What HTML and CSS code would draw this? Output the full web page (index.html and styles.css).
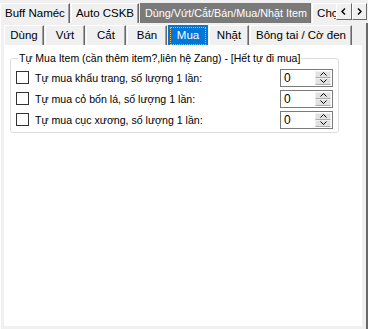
FILE: index.html
```html
<!DOCTYPE html>
<html lang="vi">
<head>
  <meta charset="UTF-8" />
  <title>Auto Item</title>
  <link rel="stylesheet" href="styles.css">
</head>
<body>
  <div class="window">
    <div class="tabbar">
      <div class="tabs">
        <div class="tab">Buff Naméc</div>
        <div class="tab">Auto CSKB</div>
        <div class="tab sel">Dùng/Vứt/Cắt/Bán/Mua/Nhặt Item</div>
        <div class="tab">Chọn map</div>
      </div>
      <div class="scroller">
        <span class="arrow"><svg width="5" height="7" viewBox="0 0 5 7"><path d="M4 0.5 L1 3.5 L4 6.5" fill="none" stroke="#000" stroke-width="1.4"/></svg></span>
        <span class="arrow"><svg width="5" height="7" viewBox="0 0 5 7"><path d="M1 0.5 L4 3.5 L1 6.5" fill="none" stroke="#000" stroke-width="1.4"/></svg></span>
      </div>
    </div>

    <div class="page">
      <div class="subtabs">
        <div class="subtab">Dùng</div>
        <div class="subtab">Vứt</div>
        <div class="subtab">Cắt</div>
        <div class="subtab">Bán</div>
        <div class="subtab active"><span class="focus">Mua</span></div>
        <div class="subtab">Nhặt</div>
        <div class="subtab">Bông tai / Cờ đen</div>
      </div>

      <div class="subpage">
        <fieldset class="group">
          <legend>Tự Mua Item (cần thêm item?,liên hệ Zang) - [Hết tự đi mua]</legend>

          <div class="row">
            <label><span class="check"></span>Tự mua khẩu trang, số lượng 1 lần:</label>
            <div class="num">
              <span class="val">0</span>
              <span class="spin">
                <span class="btn"><svg width="7" height="4" viewBox="0 0 7 4"><path d="M0.5 3.5 L3.5 0.5 L6.5 3.5" fill="none" stroke="#000"/></svg></span>
                <span class="btn"><svg width="7" height="4" viewBox="0 0 7 4"><path d="M0.5 0.5 L3.5 3.5 L6.5 0.5" fill="none" stroke="#000"/></svg></span>
              </span>
            </div>
          </div>

          <div class="row">
            <label><span class="check"></span>Tự mua cỏ bốn lá, số lượng 1 lần:</label>
            <div class="num">
              <span class="val">0</span>
              <span class="spin">
                <span class="btn"><svg width="7" height="4" viewBox="0 0 7 4"><path d="M0.5 3.5 L3.5 0.5 L6.5 3.5" fill="none" stroke="#000"/></svg></span>
                <span class="btn"><svg width="7" height="4" viewBox="0 0 7 4"><path d="M0.5 0.5 L3.5 3.5 L6.5 0.5" fill="none" stroke="#000"/></svg></span>
              </span>
            </div>
          </div>

          <div class="row">
            <label><span class="check"></span>Tự mua cục xương, số lượng 1 lần:</label>
            <div class="num">
              <span class="val">0</span>
              <span class="spin">
                <span class="btn"><svg width="7" height="4" viewBox="0 0 7 4"><path d="M0.5 3.5 L3.5 0.5 L6.5 3.5" fill="none" stroke="#000"/></svg></span>
                <span class="btn"><svg width="7" height="4" viewBox="0 0 7 4"><path d="M0.5 0.5 L3.5 3.5 L6.5 0.5" fill="none" stroke="#000"/></svg></span>
              </span>
            </div>
          </div>
        </fieldset>
      </div>
    </div>
  </div>
</body>
</html>
```

FILE: styles.css
```css
body { margin: 0; background: #f0f0f0; font: 11px "Liberation Sans", Arial, sans-serif; color: #000; }
.window { width: 368px; height: 329px; display: flex; flex-direction: column; overflow: hidden; }

/* outer tab strip */
.tabbar { display: flex; height: 23px; padding-top: 3px; box-sizing: border-box; }
.tabs { flex: 1; min-width: 0; display: flex; overflow: hidden; white-space: nowrap; }
.tab { flex-shrink: 0; height: 20px; line-height: 19px; padding: 0 4px; box-sizing: border-box; border-left: 1px solid #fff; border-top: 1px solid #fff; border-right: 1px solid #696969; box-shadow: inset -1px 0 #a0a0a0; margin-right: 1px; font-size: 11.5px; }
.tab.sel { background: #7a7a7a; color: #fff; box-shadow: none; border-left-color: #7a7a7a; border-top-color: #7a7a7a; padding: 0 3px 0 4px; font-size: 10.8px; }
.scroller { flex-shrink: 0; display: flex; width: 31px; margin-right: 1px; height: 17px; }
.arrow { flex: 1; border: 1px solid #fff; border-right-color: #696969; border-bottom-color: #696969; display: flex; align-items: center; justify-content: center; }

/* outer tab page */
.page { flex: 1; display: flex; flex-direction: column; padding: 0 4px 3px 3px; border-left: 1px solid #fff; border-right: 2px solid #696969; }

/* inner tab strip */
.subtabs { display: flex; height: 22px; padding-top: 2px; box-sizing: border-box; }
.subtab { min-width: 40px; height: 20px; line-height: 18px; padding: 0 5px; box-sizing: border-box; text-align: center; border-left: 1px solid #fff; border-top: 1px solid #fff; border-right: 1px solid #696969; box-shadow: inset -1px 0 #a0a0a0; margin-right: 1px; font-size: 11.5px; }
.subtab.active { background: #0078d7; color: #fff; border-color: #0078d7; box-shadow: none; padding: 1px; }
.focus { display: block; height: 16px; line-height: 15px; border: 1px dotted #f7b24d; }

.subpage { flex: 1; background: #fff; padding: 7px 0 0 6px; }

/* group box */
.group { width: 329px; min-width: 0; box-sizing: border-box; margin: 0; padding: 3px 5px 2px 5px; border: 1px solid #dcdcdc; border-radius: 3px; }
.group legend { padding: 0 1px; margin-left: 2px; font-size: 10.5px; }
.row { display: flex; justify-content: space-between; align-items: center; height: 21px; }
.row label { display: flex; align-items: center; gap: 6px; font-size: 10.6px; }
.check { width: 11px; height: 11px; border: 1px solid #333; background: #fff; }

/* numeric up-down */
.num { display: flex; width: 53px; height: 18px; box-sizing: border-box; border: 1px solid #7a7a7a; background: #fff; }
.val { flex: 1; padding-left: 3px; font-size: 12px; line-height: 16px; }
.spin { display: flex; flex-direction: column; width: 16px; padding: 1px; }
.btn { flex: 1; background: #e1e1e1; border: 1px solid #f0f0f0; border-bottom-color: #adadad; display: flex; align-items: center; justify-content: center; }
```
